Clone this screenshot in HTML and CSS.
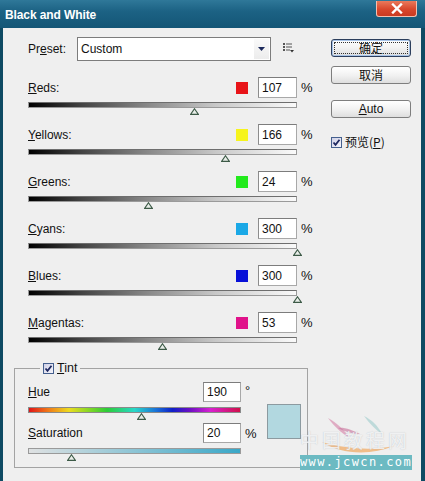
FILE: index.html
```html
<!DOCTYPE html>
<html>
<head>
<meta charset="utf-8">
<link rel="stylesheet" href="styles.css">
</head>
<body>
<div class="window">
  <div class="titlebar">
    <span class="title">Black and White</span>
    <span class="close"><svg width="12" height="11" viewBox="0 0 12 11"><path d="M2 1.5 L10 9.5 M10 1.5 L2 9.5" stroke="#fff" stroke-width="2.4" stroke-linecap="square"/></svg></span>
  </div>
  <div class="frame">
    <div class="main">
      <div class="preset">
        <span class="preset-label">Pr<u>e</u>set:</span>
        <div class="select">
          <span class="select-text">Custom</span>
          <span class="drop"><svg width="7" height="4" viewBox="0 0 7 4"><path d="M0 0 H7 L3.5 4 Z" fill="#1c2a5c"/></svg></span>
        </div>
        <svg class="menu-icon" width="11" height="10" viewBox="0 0 11 10">
          <rect x="0" y="0" width="2" height="2" fill="#555"/><rect x="3" y="0.5" width="6" height="1" fill="#555"/>
          <rect x="0" y="3" width="2" height="2" fill="#555"/><rect x="3" y="3.5" width="6" height="1" fill="#555"/>
          <rect x="0" y="6" width="2" height="2" fill="#555"/><rect x="3" y="6.5" width="4" height="1" fill="#555"/>
          <path d="M7 7 H11 L9 9.5 Z" fill="#333"/>
        </svg>
      </div>

      <div class="rows">
        <div class="adj">
          <div class="head"><span class="label"><u>R</u>eds:</span><span class="swatch sw-red"></span><span class="num">107</span><span class="unit">%</span></div>
          <div class="slider"><div class="track track-gray"></div><svg class="thumb" style="left:162px" width="9" height="7" viewBox="0 0 9 7"><path d="M4.5 0.7 L8.4 6.4 H0.6 Z" fill="#e9eee9" stroke="#3d5a47" stroke-width="1.1"/></svg></div>
        </div>
        <div class="adj">
          <div class="head"><span class="label"><u>Y</u>ellows:</span><span class="swatch sw-yellow"></span><span class="num">166</span><span class="unit">%</span></div>
          <div class="slider"><div class="track track-gray"></div><svg class="thumb" style="left:193px" width="9" height="7" viewBox="0 0 9 7"><path d="M4.5 0.7 L8.4 6.4 H0.6 Z" fill="#e9eee9" stroke="#3d5a47" stroke-width="1.1"/></svg></div>
        </div>
        <div class="adj">
          <div class="head"><span class="label"><u>G</u>reens:</span><span class="swatch sw-green"></span><span class="num">24</span><span class="unit">%</span></div>
          <div class="slider"><div class="track track-gray"></div><svg class="thumb" style="left:116px" width="9" height="7" viewBox="0 0 9 7"><path d="M4.5 0.7 L8.4 6.4 H0.6 Z" fill="#e9eee9" stroke="#3d5a47" stroke-width="1.1"/></svg></div>
        </div>
        <div class="adj">
          <div class="head"><span class="label"><u>C</u>yans:</span><span class="swatch sw-cyan"></span><span class="num">300</span><span class="unit">%</span></div>
          <div class="slider"><div class="track track-gray"></div><svg class="thumb" style="left:265px" width="9" height="7" viewBox="0 0 9 7"><path d="M4.5 0.7 L8.4 6.4 H0.6 Z" fill="#e9eee9" stroke="#3d5a47" stroke-width="1.1"/></svg></div>
        </div>
        <div class="adj">
          <div class="head"><span class="label"><u>B</u>lues:</span><span class="swatch sw-blue"></span><span class="num">300</span><span class="unit">%</span></div>
          <div class="slider"><div class="track track-gray"></div><svg class="thumb" style="left:265px" width="9" height="7" viewBox="0 0 9 7"><path d="M4.5 0.7 L8.4 6.4 H0.6 Z" fill="#e9eee9" stroke="#3d5a47" stroke-width="1.1"/></svg></div>
        </div>
        <div class="adj">
          <div class="head"><span class="label"><u>M</u>agentas:</span><span class="swatch sw-magenta"></span><span class="num">53</span><span class="unit">%</span></div>
          <div class="slider"><div class="track track-gray"></div><svg class="thumb" style="left:130px" width="9" height="7" viewBox="0 0 9 7"><path d="M4.5 0.7 L8.4 6.4 H0.6 Z" fill="#e9eee9" stroke="#3d5a47" stroke-width="1.1"/></svg></div>
        </div>
      </div>

      <fieldset class="tint">
        <legend class="tint-legend"><span class="check"><svg width="9" height="9" viewBox="0 0 9 9"><path d="M1.5 4.5 L3.5 6.8 L7.5 1.8" fill="none" stroke="#1e2860" stroke-width="1.8"/></svg></span><span class="legend-text"><u>T</u>int</span></legend>
        <div class="tint-body">
          <div class="tint-controls">
            <div class="thead"><span class="label"><u>H</u>ue</span><span class="num num-tint">190</span><span class="tunit deg">°</span></div>
            <div class="slider tslider"><div class="track track-hue"></div><svg class="thumb" style="left:109px" width="9" height="7" viewBox="0 0 9 7"><path d="M4.5 0.7 L8.4 6.4 H0.6 Z" fill="#e9eee9" stroke="#3d5a47" stroke-width="1.1"/></svg></div>
            <div class="thead thead-sat"><span class="label"><u>S</u>aturation</span><span class="num num-tint">20</span><span class="tunit">%</span></div>
            <div class="slider tslider"><div class="track track-sat"></div><svg class="thumb" style="left:39px" width="9" height="7" viewBox="0 0 9 7"><path d="M4.5 0.7 L8.4 6.4 H0.6 Z" fill="#e9eee9" stroke="#3d5a47" stroke-width="1.1"/></svg></div>
          </div>
          <div class="tint-swatch"></div>
        </div>
      </fieldset>
    </div>

    <div class="side">
      <div class="btn btn-default"><span class="cjk">确定</span></div>
      <div class="btn btn-cancel"><span class="cjk">取消</span></div>
      <div class="btn btn-auto"><span><u>A</u>uto</span></div>
      <div class="preview"><span class="check"><svg width="9" height="9" viewBox="0 0 9 9"><path d="M1.5 4.5 L3.5 6.8 L7.5 1.8" fill="none" stroke="#1e2860" stroke-width="1.8"/></svg></span><span class="cjk preview-text">预览(<u>P</u>)</span></div>
    </div>
  </div>

  <div class="watermark">
    <svg class="wm-bird" width="80" height="50" viewBox="0 0 80 50">
      <path d="M8 6 C14 14 22 22 30 26 C24 18 16 10 8 6 Z" fill="#d890b0" opacity="0.7"/>
      <path d="M18 16 C26 20 34 22 40 22 C32 18 24 15 18 16 Z" fill="#c8709a" opacity="0.6"/>
      <path d="M44 4 C50 12 56 18 62 22 C58 14 52 8 44 4 Z" fill="#9ccccc" opacity="0.6"/>
      <path d="M2 30 C20 42 50 44 74 34 C56 38 30 38 2 30 Z" fill="#f0b070" opacity="0.8"/>
    </svg>
    <div class="wm-cn">中国教程网</div>
    <div class="wm-url">www.jcwcn.com</div>
  </div>
</div>
</body>
</html>
```

FILE: styles.css
```css
html, body {
  margin: 0;
  padding: 0;
}
body {
  font-family: "Liberation Sans", Arial, sans-serif;
  font-size: 12px;
  color: #111;
}
.window {
  width: 425px;
  height: 481px;
  display: flex;
  flex-direction: column;
  position: relative;
  overflow: hidden;
  background: #0e4a63;
}
.titlebar {
  height: 28px;
  box-sizing: border-box;
  display: flex;
  justify-content: space-between;
  align-items: flex-start;
  padding: 0 8px 0 5px;
  background: linear-gradient(#2f7899, #1c6284 40%, #145676);
}
.title {
  color: #fff;
  font-weight: bold;
  font-size: 12px;
  padding-top: 8px;
  letter-spacing: -0.1px;
}
.close {
  margin-top: 1px;
  width: 41px;
  height: 16px;
  box-sizing: border-box;
  border: 1px solid #f4c0b0;
  border-top: none;
  border-radius: 0 0 3px 3px;
  background: linear-gradient(#ea7a5c, #d8472c 55%, #c93a22);
  display: flex;
  align-items: center;
  justify-content: center;
}
.frame {
  flex: 1;
  margin: 0 4px 0 3px;
  background: #efefef;
  display: flex;
  padding-top: 9px;
  box-sizing: border-box;
}
.main {
  width: 298px;
  margin-left: 11px;
}
.side {
  width: 80px;
  margin-left: 19px;
  padding-top: 2px;
}

/* preset */
.preset {
  height: 24px;
  display: flex;
  align-items: center;
  padding-left: 14px;
}
.preset-label {
  width: 49px;
}
.select {
  width: 194px;
  height: 24px;
  box-sizing: border-box;
  border: 1px solid #7c7c7c;
  background: #fff;
  display: flex;
  align-items: center;
  padding-left: 3px;
}
.select-text {
  flex: 1;
}
.drop {
  width: 15px;
  height: 20px;
  margin-right: 1px;
  display: flex;
  align-items: center;
  justify-content: center;
  background: linear-gradient(#fafafa, #ececec);
}
.menu-icon {
  margin-left: 12px;
  margin-top: -3px;
}

/* adjustment rows */
.rows {
  margin-top: 16px;
}
.adj {
  height: 47px;
  padding-left: 14px;
}
.head {
  height: 21px;
  display: flex;
  align-items: center;
}
.label {
  flex: 1;
}
.swatch {
  width: 12px;
  height: 12px;
  margin-right: 10px;
}
.sw-red { background: #e81418; }
.sw-yellow { background: #f6f41c; }
.sw-green { background: #22ea1c; }
.sw-cyan { background: #1aa8e6; }
.sw-blue { background: #0810d8; }
.sw-magenta { background: #e0128a; }
.num {
  width: 39px;
  height: 21px;
  box-sizing: border-box;
  background: #fff;
  border: 1px solid #a8a8a8;
  border-top-color: #7c7c7c;
  border-left-color: #8c8c8c;
  padding-left: 3px;
  display: flex;
  align-items: center;
}
.unit {
  width: 15px;
  padding-left: 4px;
  box-sizing: border-box;
  font-size: 13px;
}
.slider {
  position: relative;
  width: 269px;
  height: 13px;
  margin-top: 4px;
}
.track {
  height: 6px;
  box-sizing: border-box;
  border: 1px solid #9a9a9a;
  border-top-color: #6e6e6e;
}
.track-gray {
  background: linear-gradient(to right, #000 0%, #444 20%, #8a8a8a 45%, #c8c8c8 70%, #fafafa 100%);
}
.thumb {
  position: absolute;
  top: 6px;
}

/* tint */
.tint {
  margin: 2px 0 0 0;
  width: 294px;
  box-sizing: border-box;
  border: 1px solid #a3a3a3;
  padding: 0 0 6px 13px;
}
.tint-legend {
  margin-left: 12px;
  padding: 0 3px;
  display: flex;
  align-items: center;
  height: 14px;
}
.check {
  display: inline-flex;
  width: 11px;
  height: 11px;
  box-sizing: border-box;
  border: 1px solid #45608e;
  background: linear-gradient(135deg, #cfd0e6, #f6f6fc);
  align-items: center;
  justify-content: center;
}
.legend-text {
  margin-left: 3px;
  font-size: 12.5px;
}
.tint-body {
  display: flex;
  align-items: center;
  margin-top: 7px;
}
.tint-controls {
  width: 233px;
}
.thead {
  height: 20px;
  display: flex;
  align-items: center;
}
.thead-sat {
  margin-top: 3px;
}
.num-tint {
  width: 38px;
  height: 20px;
}
.tunit {
  width: 20px;
  padding-left: 4px;
  box-sizing: border-box;
  font-size: 13px;
}
.deg {
  align-self: flex-start;
  margin-top: 1px;
}
.tslider {
  width: 213px;
  margin-top: 5px;
}
.track-hue {
  background: linear-gradient(to right, #e01418 0%, #f07818 9%, #ecdc20 19%, #8ad824 28%, #2ccc38 37%, #28d8c8 50%, #1a74d8 60%, #1020c8 68%, #6a10c4 76%, #d820d0 86%, #d0104a 100%);
  border-color: #8a8a8a;
}
.track-sat {
  background: linear-gradient(to right, #dfe1e2, #3aa8c8);
  border-color: #9a9a9a;
}
.tint-swatch {
  width: 34px;
  height: 35px;
  box-sizing: border-box;
  margin-left: 6px;
  border: 1px solid #8c9aa0;
  background: #b2d8e0;
}

/* buttons */
.btn {
  height: 18px;
  box-sizing: border-box;
  border: 1px solid #7e7e7e;
  border-radius: 3px;
  background: linear-gradient(#ffffff, #f2f2f2 50%, #dedede);
  display: flex;
  align-items: center;
  justify-content: center;
  font-size: 12px;
}
.cjk {
  font-family: "Noto Sans CJK SC", "Liberation Sans", sans-serif;
  font-size: 12px;
  line-height: 1;
}
.btn-default {
  border-color: #2c3e5c;
  box-shadow: inset 0 0 0 1px #a8c4e8;
  outline: 1px dotted #333;
  outline-offset: -4px;
}
.btn-cancel {
  margin-top: 9px;
}
.btn-auto {
  margin-top: 16px;
}
.preview {
  margin-top: 18px;
  display: flex;
  align-items: center;
}
.preview-text {
  margin-left: 3px;
}

/* watermark */
.watermark {
  position: absolute;
  left: 292px;
  top: 410px;
  width: 125px;
  height: 62px;
}
.wm-bird {
  position: absolute;
  left: 28px;
  top: 2px;
}
.wm-cn {
  position: absolute;
  left: 8px;
  top: 16px;
  font-family: "Noto Sans CJK SC", sans-serif;
  font-size: 19px;
  letter-spacing: 3px;
  color: rgba(255, 255, 255, 0.75);
  text-shadow: 0 0 1px rgba(150, 160, 170, 0.6);
}
.wm-url {
  position: absolute;
  left: 8px;
  top: 45px;
  width: 112px;
  height: 15px;
  background: #6cbac2;
  color: #fff;
  font-family: "DejaVu Sans Mono", monospace;
  font-size: 12px;
  line-height: 15px;
  letter-spacing: 1.4px;
  text-align: center;
}
```
